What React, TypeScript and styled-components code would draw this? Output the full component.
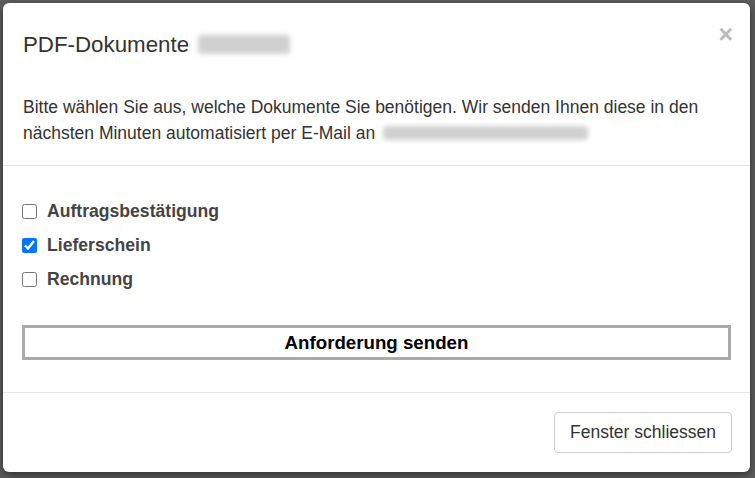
import React, { useState } from 'react'
import styled, { createGlobalStyle } from 'styled-components'

const GlobalStyle = createGlobalStyle`
  html, body {
    margin: 0;
    padding: 0;
    background: #5b5b5b;
    font-family: "Liberation Sans", Arial, sans-serif;
    color: #333;
  }
  * { box-sizing: border-box; }
`

const Backdrop = styled.div`
  width: 755px;
  height: 478px;
  padding: 3px 5px 6px 3px;
  background: #5d5d5d;
  overflow: hidden;
`

const Dialog = styled.div`
  background: #fff;
  border-radius: 6px;
  height: 100%;
  display: flex;
  flex-direction: column;
  box-shadow: 0 3px 9px rgba(0, 0, 0, 0.5);
`

const Header = styled.div`
  position: relative;
  padding: 27px 20px 14px 20px;
`

const Title = styled.h4`
  margin: 0;
  font-size: 22.3px;
  font-weight: normal;
  line-height: 30px;
  color: #333;
`

const Blurred = styled.span<{ w: number; gap: number }>`
  display: inline-block;
  width: ${({ w }) => w}px;
  height: 0.85em;
  vertical-align: -0.08em;
  margin-left: ${({ gap }) => gap}px;
  background: #d0d0d0;
  border-radius: 4px;
  filter: blur(2.5px);
`

const Close = styled.button`
  position: absolute;
  top: 19px;
  right: 17px;
  border: 0;
  background: none;
  padding: 0;
  font-family: "Liberation Sans", Arial, sans-serif;
  font-size: 25px;
  font-weight: bold;
  line-height: 1;
  color: #bbb;
  cursor: pointer;
`

const Body = styled.div`
  padding: 20px 20px 19px 20px;
  font-size: 17.5px;
  line-height: 26px;
  border-bottom: 1px solid #e5e5e5;
`

const Options = styled.div`
  padding: 32px 19px 32px 19px;
  display: flex;
  flex-direction: column;
  border-bottom: 1px solid #e5e5e5;
`

const List = styled.div`
  display: flex;
  flex-direction: column;
  gap: 8px;
`

const Row = styled.label`
  display: flex;
  align-items: center;
  gap: 10px;
  height: 26px;
  font-size: 17.6px;
  font-weight: bold;
  color: #444;
  cursor: pointer;
`

const Box = styled.input`
  width: 15px;
  height: 15px;
  margin: 0;
  accent-color: #0075ff;
`

const SendButton = styled.button`
  margin-top: 33px;
  height: 35px;
  width: 100%;
  background: #fff;
  border: 3px solid #aaa;
  font-family: "Liberation Sans", Arial, sans-serif;
  font-size: 18.7px;
  font-weight: bold;
  color: #000;
  cursor: pointer;
`

const Footer = styled.div`
  flex: 1;
  display: flex;
  justify-content: flex-end;
  align-items: flex-start;
  padding: 19px 18px 0 20px;
`

const CloseButton = styled.button`
  height: 41px;
  padding: 0 15px;
  background: #fff;
  border: 1px solid #ccc;
  border-radius: 4px;
  font-family: "Liberation Sans", Arial, sans-serif;
  font-size: 17.5px;
  color: #333;
  cursor: pointer;
`

const docs = ['Auftragsbestätigung', 'Lieferschein', 'Rechnung']

export default function App() {
  const [checked, setChecked] = useState<Record<string, boolean>>({ Lieferschein: true })
  return (
    <>
      <GlobalStyle />
      <Backdrop>
        <Dialog>
          <Header>
            <Title>
              PDF-Dokumente<Blurred w={92} gap={9} />
            </Title>
            <Close aria-label="Schliessen">×</Close>
          </Header>
          <Body>
            Bitte wählen Sie aus, welche Dokumente Sie benötigen. Wir senden Ihnen diese in den nächsten
            Minuten automatisiert per E-Mail an<Blurred w={205} gap={8} />
          </Body>
          <Options>
            <List>
              {docs.map(d => (
                <Row key={d}>
                  <Box
                    type="checkbox"
                    checked={!!checked[d]}
                    onChange={e => setChecked({ ...checked, [d]: e.target.checked })}
                  />
                  {d}
                </Row>
              ))}
            </List>
            <SendButton>Anforderung senden</SendButton>
          </Options>
          <Footer>
            <CloseButton>Fenster schliessen</CloseButton>
          </Footer>
        </Dialog>
      </Backdrop>
    </>
  )
}
